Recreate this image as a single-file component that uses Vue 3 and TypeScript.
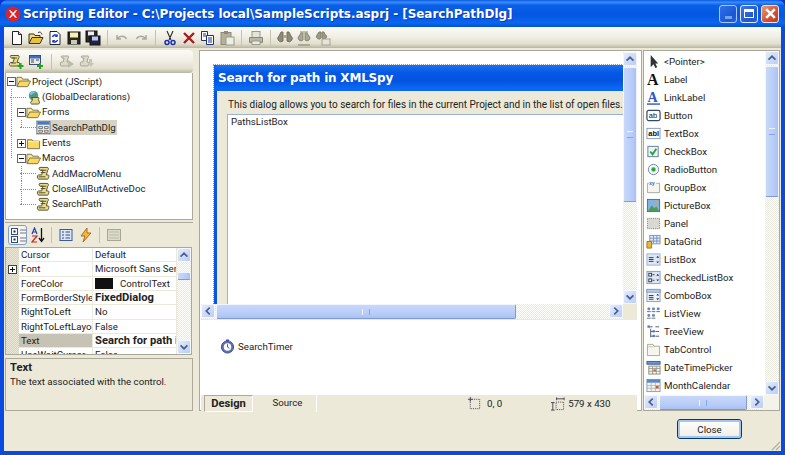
<script setup lang="ts">
type TreeRow = { label: string; level: number; icon: string; box?: '+' | '-'; selected?: boolean; guides?: [number, boolean][] }

const glyphs: Record<string, string> = {
  newfile: '<path d="M3.500 1.500h6l3 3v10h-9z" fill="#fff" stroke="#222"/><path d="M9.500 1.500v3h3" fill="#ddd" stroke="#222"/>',
  open: '<path d="M1 13V4h5l1 1.500h5V8" fill="#f5dc7a" stroke="#333"/><path d="M1 13.500l3-6h11l-3 6z" fill="#e8c33c" stroke="#333"/><path d="M10 2.500c2-1 3.500 0 4 2" fill="none" stroke="#333"/>',
  reload: '<path d="M3 1.500h7l3 3v10H3z" fill="#fff" stroke="#223"/><path d="M5.500 7a3 3 0 0 1 5-1M10.500 10a3 3 0 0 1-5 1" fill="none" stroke="#1d35d8" stroke-width="1.500"/><path d="M10.500 4v3h-3M5.500 13v-3h3" fill="#1d35d8"/>',
  save: '<rect x="2" y="2" width="12" height="12" fill="#2a2a18" stroke="#111"/><rect x="4" y="2.500" width="8" height="5" fill="#f6efb8"/><rect x="5" y="10" width="6" height="4" fill="#c9c9c0"/>',
  saveall: '<rect x="1" y="1" width="11" height="11" fill="#2a2a28" stroke="#111"/><rect x="3" y="1.500" width="6" height="4" fill="#eee"/><rect x="5" y="6" width="10" height="9" fill="#23233f" stroke="#111"/><rect x="7" y="6.500" width="6" height="4" fill="#b8c8f4"/>',
  undo: '<path d="M3 5v4h4M3.500 8.500c2-3 7-3.500 9 .5" fill="none" stroke="#a9a99c" stroke-width="1.500"/>',
  redo: '<path d="M13 5v4H9M12.500 8.500c-2-3-7-3.500-9 .5" fill="none" stroke="#a9a99c" stroke-width="1.500"/>',
  cut: '<path d="M5 1l4 9M11 1L7 10" stroke="#333" stroke-width="1.200" fill="none"/><circle cx="5" cy="12.500" r="2" fill="none" stroke="#1b2fa8" stroke-width="1.500"/><circle cx="11" cy="12.500" r="2" fill="none" stroke="#1b2fa8" stroke-width="1.500"/>',
  del: '<path d="M3 3l10 10M13 3L3 13" stroke="#a81c1c" stroke-width="2.400"/>',
  copy: '<path d="M1.500 1.500h6v9h-6z" fill="#fff" stroke="#334"/><path d="M6.500 5.500h7v9h-7z" fill="#fff" stroke="#1b2f90"/><path d="M3 4h3M3 6h3M8 8h4M8 10h4M8 12h4" stroke="#1b2f90"/>',
  paste: '<rect x="2" y="2.500" width="10" height="12" fill="#b5b09a" stroke="#8d8a7a"/><rect x="5" y="1" width="4" height="3" fill="#8d8a7a"/><rect x="7" y="7" width="8" height="8" fill="#eeeee6" stroke="#9a9a8c"/>',
  print: '<rect x="4" y="1.500" width="8" height="6" fill="#e6e4d8" stroke="#9a9a8c"/><path d="M1.500 7.500h13v5h-13z" fill="#b9b6a4" stroke="#8b8a78"/><rect x="4" y="11" width="8" height="3.500" fill="#eeeee6" stroke="#9a9a8c"/>',
  find: '<path d="M2 6l2-4h2v9a3 3 0 1 1-4-5zM14 6l-2-4h-2v9a3 3 0 1 0 4-5z" fill="#8d8a78" stroke="#77735f"/><rect x="6" y="5" width="4" height="3" fill="#a9a794"/>',
  findnext: '<path d="M4 2h8M3 6l2-3h2v7a2.500 2.500 0 1 1-4-4zM13 6l-2-3H9v7a2.500 2.500 0 1 0 4-4z" fill="#a9a794" stroke="#8d8a78"/><path d="M2 15h12" stroke="#9c9a88" stroke-width="1.500"/>',
  replace: '<path d="M2 5l2-3h2v6a2.500 2.500 0 1 1-4-3zM10 5L9 2H7v6a2.500 2.500 0 1 0 4-3z" fill="#9c9a88" stroke="#84826f"/><rect x="7" y="9" width="8" height="6" fill="#e7e5d7" stroke="#a3a18f"/>',
  scriptadd: '<path d="M3 1.500h7c1.500 0 1.500 2 .5 2.500L9 8.500h2c1 0 1 2.500 0 3.500H2.500c-1.500-.5-1.500-3 0-3.500H5l1.500-4.500H3.500c-1.500-.5-1.500-2.500-.5-2.500z" fill="#e9dc8e" stroke="#5f5a30"/><path d="M4 4h5M3 9h5" stroke="#5f5a30"/><path d="M12.500 9v6M9.500 12h6" stroke="#1fa51f" stroke-width="2"/>',
  formadd: '<rect x="1.500" y="1.500" width="11" height="9" fill="#ecebdf" stroke="#35507c"/><rect x="2" y="2" width="10" height="2.500" fill="#3f6fc4"/><path d="M3 6h3M3 8h3M8 6h3" stroke="#445"/><path d="M12 9v6M9 12h6" stroke="#1fa51f" stroke-width="2"/>',
  rungray: '<path d="M3 2h6c1 0 1 2 0 2L8 8h1c1 0 1 2 0 4H2c-1-1-1-3 0-4h2l1-4H3c-1-1-1-2 0-2z" fill="#dcdacb" stroke="#a9a794"/><path d="M9 6l6 4-6 4z" fill="#bdbba9"/>',
  debuggray: '<path d="M3 2h6c1 0 1 2 0 2L8 8h1c1 0 1 2 0 4H2c-1-1-1-3 0-4h2l1-4H3c-1-1-1-2 0-2z" fill="#dcdacb" stroke="#a9a794"/><path d="M10 5h3v4h2l-3 4-3-4h1z" fill="#c7c5b3"/>',
  folderopen: '<path d="M1 13V3.500h5l1 2h6V8" fill="#fbe98f" stroke="#76705a"/><path d="M1 13.500l3-6h11.500l-3 6z" fill="#fcd95c" stroke="#76705a"/>',
  folder: '<path d="M1.500 13.500V4h5l1 1.500h7v8z" fill="#fcd95c" stroke="#76705a"/><path d="M2 6h12" stroke="#fff3b0"/>',
  global: '<circle cx="8" cy="6" r="5" fill="#4a9a84"/><path d="M4 3c2-2 5-2 6-1-1 2-3 1-4 3-1 1-2 0-2-2z" fill="#7fc0e8"/><path d="M6 8h7c1 0 1 2 0 2l1 2c1 1 0 3-1 3H6c-2-1-1-3 0-3l1-2z" fill="#e3d684" stroke="#555028"/>',
  form: '<rect x="1" y="1.500" width="14" height="13" fill="#f2f0e6" stroke="#5f7fa8"/><rect x="1.500" y="2" width="13" height="3" fill="#4a79c9"/><path d="M3 7h4v2H3zM9 7h4v2H9zM3 11h4v2H3zM9 11h4v2H9z" fill="none" stroke="#555" stroke-width=".8"/>',
  script: '<path d="M4 1.500h8c1.500 0 1.500 2.500.5 3L11 9.500h2c1 0 1 3-.5 4.500H3c-2-.5-2-3.500-.5-4.500H6l1.500-5H4.500C3 4 3 1.500 4 1.500z" fill="#e9dc8e" stroke="#4f4b28"/><path d="M5 4.500h6M5 7h5M3 11.500h7" stroke="#4f4b28"/>',
  categorized: '<rect x="1.500" y="1.500" width="6" height="6" fill="#fff" stroke="#2d4c8c"/><rect x="1.500" y="9.500" width="6" height="6" fill="#fff" stroke="#2d4c8c"/><rect x="3.500" y="3.500" width="2" height="2" fill="#223"/><rect x="3.500" y="11.500" width="2" height="2" fill="#223"/><path d="M10 3h6M10 6h6M10 11h6M10 14h6" stroke="#778"/>',
  sorted: '<path d="M11.500 1v13M9 11l2.500 3.500L14 11" stroke="#111" stroke-width="1.300" fill="none"/><path d="M2 7l2.500-6L7 7M3 5h3" stroke="#2142b4" fill="none" stroke-width="1.200"/><path d="M2 9h5L2 15h5" stroke="#c22" fill="none" stroke-width="1.200"/>',
  props: '<rect x="2" y="2.500" width="12" height="11" fill="#dfe6f5" stroke="#3a5a98"/><path d="M4 5h2M4 8h2M4 11h2M7.500 5H12M7.500 8H12M7.500 11H12" stroke="#2d4c8c"/>',
  events: '<path d="M9 1L3 9h4l-2 6 8-9H9z" fill="#f6b73c" stroke="#b26a18"/>',
  pages: '<rect x="1.500" y="2.500" width="13" height="11" fill="#dcdacb" stroke="#a9a794"/><path d="M3 5h10M3 8h10M3 11h10" stroke="#bdbba9"/>',
  pointer: '<path d="M5 1v13l3-3 2 4 2-1-2-4h3z" fill="#333"/>',
  label: '<text x="1" y="14" font-family="Liberation Serif" font-size="17" font-weight="700" fill="#111">A</text>',
  linklabel: '<text x="1.500" y="13" font-family="Liberation Serif" font-size="15" font-weight="700" fill="#2b57c4">A</text><path d="M1 15h14" stroke="#2b57c4" stroke-width="1.500"/>',
  button: '<rect x="1" y="2.500" width="14" height="11" rx="2" fill="#fff" stroke="#334a6e" stroke-width="1.300"/><text x="3" y="11" font-family="Liberation Sans" font-size="8" fill="#111">ab</text>',
  textbox: '<rect x="1" y="2.500" width="14" height="11" fill="#fff" stroke="#7f9db9"/><text x="2.500" y="11" font-family="Liberation Sans" font-size="8" font-weight="700" fill="#111">abl</text>',
  checkbox: '<rect x="2" y="2.500" width="11" height="11" fill="#eef3f8" stroke="#5d7c9c"/><path d="M4.500 8l2.500 3 4-6" fill="none" stroke="#27a53b" stroke-width="2"/>',
  radio: '<circle cx="8" cy="8" r="5.500" fill="#f2f4f8" stroke="#6e87a6"/><circle cx="8" cy="8" r="2.300" fill="#2fa53c"/>',
  groupbox: '<path d="M3 3.500H1.500v10h13v-10H11" fill="#f5f4ee" stroke="#a5a597"/><text x="3.500" y="5" font-family="Liberation Sans" font-size="5" font-weight="700" fill="#2b57c4">xy</text>',
  picture: '<rect x="1.500" y="1.500" width="13" height="13" fill="#7fb4e2" stroke="#56687e"/><path d="M2 14l4-6 3 3 2-2 3 5z" fill="#4e9a56"/><circle cx="11" cy="5" r="1.800" fill="#e8a43a"/>',
  panel: '<rect x="1.500" y="2.500" width="13" height="11" fill="#d9d9d2" stroke="#77776c" stroke-dasharray="1 1"/>',
  datagrid: '<rect x="4" y="1.500" width="11" height="9" fill="#e2e8f6" stroke="#7b93be"/><path d="M4 4.500h11M4 7.500h11M8 2v8M11.500 2v8" stroke="#7b93be"/><path d="M1 8h5v7H1z" fill="#e8b838" stroke="#9b7818"/>',
  listbox: '<rect x="1" y="2" width="14" height="12" fill="#dce6f6" stroke="#9bb2d4"/><path d="M3 6h5M3 8h5M3 10h5" stroke="#333"/><path d="M11 6l1.500-2L14 6zM11 10l1.500 2 1.500-2z" fill="#334"/>',
  checkedlist: '<rect x="1" y="1.500" width="14" height="13" fill="#dce6f6" stroke="#7f9fcc"/><rect x="3" y="3.500" width="3" height="3" fill="#fff" stroke="#334"/><rect x="3" y="9.500" width="3" height="3" fill="#fff" stroke="#334"/><path d="M7 5h2M7 11h2" stroke="#334"/><path d="M11 6l1.500-2L14 6zM11 10l1.500 2 1.500-2z" fill="#334"/>',
  combobox: '<rect x="1" y="1.500" width="14" height="13" fill="#eef2f9" stroke="#7f9fcc"/><rect x="1" y="1.500" width="14" height="3" fill="#b8cbe8" stroke="#7f9fcc"/><path d="M3 8h5M3 10h5M3 12h5" stroke="#333"/><path d="M11 8l1.500-2L14 8zM11 11l1.500 2 1.500-2z" fill="#334"/>',
  listview: '<path d="M2 2h2v2H2zM7 2h2v2H7zM12 2h2v2h-2zM2 9h2v2H2zM7 9h2v2H7z" fill="#6f9fd8" stroke="#3d5e8c" stroke-width=".6"/><path d="M1 6h4M6 6h4M11 6h4M1 13h4M6 13h4" stroke="#667"/>',
  treeview: '<path d="M3 3h4M5 5v9M5 8h3M5 13h3M10 8h4M10 13h4M10 3h4" stroke="#556" stroke-width="1"/><rect x="1.500" y="1.500" width="2.500" height="2.500" fill="#4d7fc8"/><rect x="7" y="6.500" width="2.500" height="2.500" fill="#4d7fc8"/><rect x="7" y="11.500" width="2.500" height="2.500" fill="#4d7fc8"/>',
  tabcontrol: '<path d="M1.500 14.500V2.500h6l1 2h6v10z" fill="#f6f5ee" stroke="#a5a597"/><path d="M2 5h6" stroke="#c7c6b7"/>',
  datetime: '<rect x="1" y="1.500" width="14" height="3" fill="#6f94cc" stroke="#3d5e8c"/><rect x="3" y="6.500" width="12" height="8.500" fill="#f4f4ee" stroke="#8b8b80"/><path d="M3 9h12M3 12h12M7 7v8M11 7v8" stroke="#8b8b80" stroke-width=".8"/><rect x="8" y="10" width="2.500" height="2" fill="#d4522c"/>',
  calendar: '<rect x="1" y="1.500" width="14" height="13" fill="#f4f4ee" stroke="#7f9fcc"/><rect x="1" y="1.500" width="14" height="3.500" fill="#5b86c8"/><path d="M1 8h14M1 11h14M5.500 5v9M10 5v9" stroke="#aaa" stroke-width=".8"/><rect x="10.500" y="8.500" width="3" height="2.500" fill="#d4522c"/>',
  timer: '<circle cx="8" cy="8.500" r="6.500" fill="#5c6fb0" stroke="#3f4f8c"/><circle cx="8" cy="8.500" r="4" fill="#fff"/><path d="M8 8.500V5.500M8 8.500l2 1.500" stroke="#3f4f8c"/><rect x="6.500" y="0.500" width="3" height="2" fill="#3f4f8c"/>',
  pos: '<path d="M3.500 1v5M1 3.500h5" stroke="#445"/><rect x="3.500" y="3.500" width="10" height="10" fill="none" stroke="#445" stroke-dasharray="1 1"/>',
  size: '<path d="M7 1.500v3M15 1.500v3M7 3h8M1 7h4M1 15h4M3 7v8" stroke="#445"/><rect x="6.500" y="6.500" width="8" height="8" fill="none" stroke="#445" stroke-dasharray="1 1"/>',
}

const mainTools = [
  'newfile', 'open', 'reload', 'save', 'saveall', '|', 'undo', 'redo', '|',
  'cut', 'del', 'copy', 'paste', '|', 'print', '|', 'find', 'findnext', 'replace',
]

const treeTools = ['scriptadd', 'formadd', '|', 'rungray', 'debuggray']
const propTools = ['categorized', 'sorted', '|', 'props', 'events', '|', 'pages']

const treeRows: TreeRow[] = [
  { label: 'Project (JScript)', level: 0, icon: 'folderopen', box: '-' },
  { label: '(GlobalDeclarations)', level: 1, icon: 'global', guides: [[5, false]] },
  { label: 'Forms', level: 1, icon: 'folderopen', box: '-', guides: [[5, false]] },
  { label: 'SearchPathDlg', level: 2, icon: 'form', selected: true, guides: [[5, false], [15, true]] },
  { label: 'Events', level: 1, icon: 'folder', box: '+', guides: [[5, false]] },
  { label: 'Macros', level: 1, icon: 'folderopen', box: '-', guides: [[5, true]] },
  { label: 'AddMacroMenu', level: 2, icon: 'script', guides: [[15, false]] },
  { label: 'CloseAllButActiveDoc', level: 2, icon: 'script', guides: [[15, false]] },
  { label: 'SearchPath', level: 2, icon: 'script', guides: [[15, true]] },
]

// dotted connector lines of a tree row, half = the line stops at the row's middle
const guideStyle = (row: TreeRow) => {
  if (!row.guides) return {}
  return {
    background: row.guides
      .map(([x, half]) => `repeating-linear-gradient(#8c8c8c 0 1px, transparent 1px 2px) ${x}px 0 / 1px ${half ? '50%' : '100%'} no-repeat`)
      .join(','),
  }
}

const propRows = [
  { name: 'Cursor', value: 'Default' },
  { name: 'Font', value: 'Microsoft Sans Serif', expand: true },
  { name: 'ForeColor', value: 'ControlText', swatch: true },
  { name: 'FormBorderStyle', value: 'FixedDialog', bold: true },
  { name: 'RightToLeft', value: 'No' },
  { name: 'RightToLeftLayout', value: 'False' },
  { name: 'Text', value: 'Search for path in XMLSpy', bold: true, selected: true },
  { name: 'UseWaitCursor', value: 'False' },
]

const toolbox = [
  ['pointer', '<Pointer>'], ['label', 'Label'], ['linklabel', 'LinkLabel'], ['button', 'Button'],
  ['textbox', 'TextBox'], ['checkbox', 'CheckBox'], ['radio', 'RadioButton'], ['groupbox', 'GroupBox'],
  ['picture', 'PictureBox'], ['panel', 'Panel'], ['datagrid', 'DataGrid'], ['listbox', 'ListBox'],
  ['checkedlist', 'CheckedListBox'], ['combobox', 'ComboBox'], ['listview', 'ListView'],
  ['treeview', 'TreeView'], ['tabcontrol', 'TabControl'], ['datetime', 'DateTimePicker'],
  ['calendar', 'MonthCalendar'],
]

const arrows: Record<string, string> = {
  up: 'M3 9l4-4 4 4',
  down: 'M3 5l4 4 4-4',
  left: 'M9 3L5 7l4 4',
  right: 'M5 3l4 4-4 4',
}
</script>

<template>
  <div class="window">
    <header class="titlebar">
      <svg class="logo" viewBox="0 0 16 16">
        <circle cx="8" cy="8" r="7.500" fill="#d8252c" />
        <path d="M4 4c2 0 3 2 4 3 1-1 2-3 4-3-1 2-2 3-3 4 1 1 2 2 3 4-2 0-3-2-4-3-1 1-2 3-4 3 1-2 2-3 3-4-1-1-2-2-3-4z" fill="#fff" />
      </svg>
      <span class="title-text">Scripting Editor - C:\Projects local\SampleScripts.asprj - [SearchPathDlg]</span>
      <div class="caption-buttons">
        <span class="cap cap-min"><i></i></span>
        <span class="cap cap-max"><i></i></span>
        <span class="cap cap-close">
          <svg viewBox="0 0 12 12"><path d="M2 2l8 8M10 2l-8 8" stroke="#fff" stroke-width="2.400" /></svg>
        </span>
      </div>
    </header>

    <div class="client">
      <div class="toolbar main-toolbar">
        <template v-for="(tool, i) in mainTools" :key="i">
          <span v-if="tool === '|'" class="sep"></span>
          <svg v-else class="tool-icon" viewBox="0 0 16 16" v-html="glyphs[tool]"></svg>
        </template>
      </div>

      <div class="panes">
        <aside class="left-col">
          <div class="toolbar tree-toolbar">
            <template v-for="(tool, i) in treeTools" :key="i">
              <span v-if="tool === '|'" class="sep"></span>
              <svg v-else class="tool-icon" viewBox="0 0 16 16" v-html="glyphs[tool]"></svg>
            </template>
          </div>
          <div class="tree">
            <div
              v-for="row in treeRows"
              :key="row.label"
              class="tree-row"
              :class="`lvl-${row.level}`"
              :style="guideStyle(row)"
            >
              <span class="tree-gutter">
                <svg v-if="row.box" class="box" viewBox="0 0 9 9">
                  <rect x=".5" y=".5" width="8" height="8" fill="#fff" stroke="#666" />
                  <path :d="row.box === '+' ? 'M2 4.500h5M4.500 2v5' : 'M2 4.500h5'" stroke="#111" />
                </svg>
                <span v-else class="stub"></span>
              </span>
              <span class="node" :class="{ picked: row.selected }">
                <svg class="node-icon" viewBox="0 0 16 16" v-html="glyphs[row.icon]"></svg>
                <span class="node-label">{{ row.label }}</span>
              </span>
            </div>
          </div>

          <div class="props">
            <div class="prop-tools">
              <template v-for="(tool, i) in propTools" :key="i">
                <span v-if="tool === '|'" class="sep"></span>
                <span v-else class="prop-btn" :class="{ on: tool === 'categorized' }">
                  <svg class="tool-icon" viewBox="0 0 16 16" v-html="glyphs[tool]"></svg>
                </span>
              </template>
            </div>
            <div class="grid-wrap">
              <div class="grid">
                <div v-for="p in propRows" :key="p.name" class="prop-row">
                  <span class="gutter">
                    <svg v-if="p.expand" class="box" viewBox="0 0 9 9">
                      <rect x=".5" y=".5" width="8" height="8" fill="#fff" stroke="#444" />
                      <path d="M2 4.500h5M4.500 2v5" stroke="#111" />
                    </svg>
                  </span>
                  <span class="prop-name" :class="{ sel: p.selected }">{{ p.name }}</span>
                  <span class="prop-val" :class="{ strong: p.bold }">
                    <i v-if="p.swatch" class="swatch"></i>{{ p.value }}
                  </span>
                </div>
              </div>
              <div class="sb sb-v">
                <span class="sb-btn"><svg viewBox="0 0 14 14"><path :d="arrows.up" /></svg></span>
                <span class="sb-track"><span class="sb-thumb" style="height: 8px; margin-top: 9px"></span></span>
                <span class="sb-btn"><svg viewBox="0 0 14 14"><path :d="arrows.down" /></svg></span>
              </div>
            </div>
            <div class="desc">
              <b>Text</b>
              <span>The text associated with the control.</span>
            </div>
          </div>
        </aside>

        <main class="center">
          <div class="design-row">
            <div class="surface">
              <div class="form">
                <div class="form-title">Search for path in XMLSpy</div>
                <div class="form-body">
                  <p>This dialog allows you to search for files in the current Project and in the list of open files.</p>
                  <div class="listbox">PathsListBox</div>
                </div>
              </div>
            </div>
            <div class="sb sb-v">
              <span class="sb-btn"><svg viewBox="0 0 14 14"><path :d="arrows.up" /></svg></span>
              <span class="sb-track"><span class="sb-thumb" style="height: 135px"><em class="grip-h"></em></span></span>
              <span class="sb-btn"><svg viewBox="0 0 14 14"><path :d="arrows.down" /></svg></span>
            </div>
          </div>
          <div class="hbar-row">
            <div class="sb sb-h">
              <span class="sb-btn"><svg viewBox="0 0 14 14"><path :d="arrows.left" /></svg></span>
              <span class="sb-track"><span class="sb-thumb" style="width: 300px"><em class="grip-v"></em></span></span>
              <span class="sb-btn"><svg viewBox="0 0 14 14"><path :d="arrows.right" /></svg></span>
            </div>
          </div>
          <div class="tray">
            <svg class="node-icon" viewBox="0 0 16 16" v-html="glyphs.timer"></svg>
            <span>SearchTimer</span>
          </div>
          <div class="statusbar">
            <span class="tab active">Design</span>
            <span class="tab">Source</span>
            <span class="stat stat-pos"><svg class="node-icon" viewBox="0 0 16 16" v-html="glyphs.pos"></svg>0, 0</span>
            <span class="stat stat-size"><svg class="node-icon" viewBox="0 0 16 16" v-html="glyphs.size"></svg>579 x 430</span>
          </div>
        </main>

        <aside class="right-col">
          <div class="right-top">
            <ul class="toolbox">
              <li v-for="item in toolbox" :key="item[1]">
                <svg class="node-icon" viewBox="0 0 16 16" v-html="glyphs[item[0]]"></svg>
                <span>{{ item[1] }}</span>
              </li>
            </ul>
            <div class="sb sb-v">
              <span class="sb-btn"><svg viewBox="0 0 14 14"><path :d="arrows.up" /></svg></span>
              <span class="sb-track"><span class="sb-thumb" style="height: 131px"><em class="grip-h"></em></span></span>
              <span class="sb-btn"><svg viewBox="0 0 14 14"><path :d="arrows.down" /></svg></span>
            </div>
          </div>
          <div class="right-bar">
            <div class="sb sb-h">
              <span class="sb-btn"><svg viewBox="0 0 14 14"><path :d="arrows.left" /></svg></span>
              <span class="sb-track"><span class="sb-thumb" style="width: 88px"><em class="grip-v"></em></span></span>
              <span class="sb-btn"><svg viewBox="0 0 14 14"><path :d="arrows.right" /></svg></span>
            </div>
          </div>
        </aside>
      </div>

      <footer class="footer">
        <button class="close-btn">Close</button>
        <svg class="resize-grip" viewBox="0 0 12 12">
          <path d="M11 3l-8 8M11 7l-4 4" stroke="#b5b2a0" stroke-width="1.300" />
        </svg>
      </footer>
    </div>
  </div>
</template>

<style>
html,
body {
  margin: 0;
  background: #0831d9;
  overflow: hidden;
}
</style>

<style scoped>
.window {
  width: 785px;
  height: 455px;
  display: flex;
  flex-direction: column;
  font-family: Roboto, 'Liberation Sans', sans-serif;
  font-size: 9.7px;
  color: #222;
  background: #0a4ae0;
  box-sizing: border-box;
  padding: 0 4px 4px;
  overflow: hidden;
  border-radius: 7px 7px 0 0;
}

.titlebar {
  height: 27px;
  flex: none;
  margin: 0 -4px;
  padding: 0 6px 0 5px;
  display: flex;
  align-items: center;
  background: linear-gradient(#0a5ae6 0, #3b8cf8 8%, #0a5fe8 20%, #0457e2 55%, #0b66f0 85%, #0350d0 100%);
  border-radius: 7px 7px 0 0;
}

.logo {
  width: 16px;
  height: 16px;
  flex: none;
}

.title-text {
  margin-left: 2px;
  font-size: 12px;
  font-weight: 700;
  font-family: 'DejaVu Sans', sans-serif;
  letter-spacing: -0.05px;
  color: #fff;
  text-shadow: 1px 1px 0 #0a3aa8;
  white-space: nowrap;
}

.caption-buttons {
  margin-left: auto;
  display: flex;
  gap: 3px;
}

.cap {
  width: 18px;
  height: 18px;
  border: 1px solid #dfe9fb;
  border-radius: 3px;
  box-sizing: border-box;
  display: flex;
  align-items: center;
  justify-content: center;
  background: linear-gradient(135deg, #3f78e8, #2256cf 70%, #2a62de);
}

.cap-min {
  opacity: 0.75;
}

.cap-min i {
  width: 7px;
  height: 3px;
  margin-top: 8px;
  background: #9db9ee;
}

.cap-max i {
  width: 10px;
  height: 9px;
  border: 1px solid #fff;
  border-top-width: 3px;
  box-sizing: border-box;
}

.cap-close {
  background: linear-gradient(135deg, #ec9a7c, #d9532f 55%, #c23a1c);
}

.cap-close svg {
  width: 13px;
  height: 13px;
}

.client {
  flex: 1;
  min-height: 0;
  display: flex;
  flex-direction: column;
  background: #ece9d8;
}

.toolbar {
  display: flex;
  align-items: center;
  flex: none;
  background: linear-gradient(#fbfaf6, #f1efe5 45%, #e2dfcf 80%, #b8b5a2);
}

.main-toolbar {
  height: 21px;
  padding-left: 5px;
  gap: 3px;
}

.tool-icon {
  width: 16px;
  height: 16px;
  flex: none;
}

.sep {
  width: 1px;
  height: 16px;
  margin: 0 3px;
  background: #c5c2b0;
  flex: none;
}

.panes {
  flex: 1;
  min-height: 0;
  display: flex;
  padding-top: 2px;
}

.left-col {
  width: 188px;
  margin-left: 1px;
  flex: none;
  display: flex;
  flex-direction: column;
}

.tree-toolbar {
  height: 23px;
  padding-left: 3px;
  gap: 4px;
  border-radius: 0 4px 4px 0;
}

.tree {
  height: 147px;
  flex: none;
  box-sizing: border-box;
  padding-top: 1px;
  background: #fff;
  border: 1px solid #aca899;
  border-top: 0;
}

.tree-row {
  height: 15.35px;
  display: flex;
  align-items: center;
  white-space: nowrap;
}

.tree-gutter {
  width: 10px;
  flex: none;
  display: flex;
  justify-content: flex-end;
}

.tree-gutter:has(.box) {
  justify-content: center;
}

.lvl-1 {
  padding-left: 10px;
}

.lvl-2 {
  padding-left: 20px;
}

.box {
  width: 9px;
  height: 9px;
  flex: none;
}

.stub {
  width: 16px;
  flex: none;
  border-top: 1px dotted #8c8c8c;
}

.node-icon {
  width: 15px;
  height: 15px;
  flex: none;
}

.node {
  display: flex;
  align-items: center;
  padding-right: 1px;
}

.node.picked {
  background: #d6d3c5;
}

.node-label {
  margin-left: 1px;
  line-height: 14px;
}

.props {
  flex: 1;
  min-height: 0;
  margin-top: 2px;
  display: flex;
  flex-direction: column;
  border-top: 1px solid #aca899;
}

.prop-tools {
  height: 24px;
  flex: none;
  display: flex;
  align-items: center;
  padding-left: 3px;
  gap: 1px;
}

.prop-btn {
  width: 19px;
  height: 20px;
  display: flex;
  align-items: center;
  justify-content: center;
  box-sizing: border-box;
}

.prop-btn.on {
  background: #f6f6ee;
  border: 1px solid #7d9cd0;
  border-radius: 3px;
}

.grid-wrap {
  height: 108px;
  flex: none;
  margin-right: 1px;
  display: flex;
  overflow: hidden;
  border: 1px solid #aca899;
  box-sizing: border-box;
}

.grid {
  flex: 1;
  min-width: 0;
  overflow: hidden;
  background: #fff;
}

.prop-row {
  height: 14.35px;
  display: grid;
  grid-template-columns: 13px 74px 1fr;
  align-items: stretch;
  box-sizing: border-box;
  line-height: 14px;
}

.gutter {
  background: repeating-conic-gradient(#d6d3c3 0 25%, #e9e6d6 0 50%) 0 0 / 2px 2px;
  display: flex;
  align-items: center;
  justify-content: center;
}

.prop-name,
.prop-val {
  white-space: nowrap;
  overflow: hidden;
  padding-left: 2px;
  border-bottom: 1px solid #ece9d8;
  border-right: 1px solid #ece9d8;
}

.prop-name.sel {
  background: #c6c3b4;
}

.strong {
  font-weight: 700;
  font-size: 11.2px;
}

.swatch {
  display: inline-block;
  width: 18px;
  height: 11px;
  background: #111;
  margin-right: 7px;
  vertical-align: -2px;
}

.desc {
  flex: 1;
  margin-top: 3px;
  box-sizing: border-box;
  padding: 2px 4px;
  display: flex;
  flex-direction: column;
  gap: 1px;
  line-height: 13px;
  border: 1px solid #aca899;
}

.desc b {
  font-size: 11.2px;
}

.center {
  width: 443px;
  margin-left: 6px;
  flex: none;
  display: flex;
  flex-direction: column;
  background: #fff;
  border: 1px solid #aca899;
  box-sizing: border-box;
  padding: 1px 4px 1px 1px;
}

.design-row {
  height: 252px;
  flex: none;
  display: flex;
}

.surface {
  flex: 1;
  min-width: 0;
  padding: 13px 0 0 13px;
  overflow: hidden;
  background: #fff;
}

.form {
  width: 579px;
  height: 430px;
  outline: 1px dotted #999;
  border: 3px solid #0a55e0;
  border-top: 0;
  box-sizing: border-box;
  background: #ece9d8;
}

.form-title {
  height: 26px;
  margin: 0 -3px;
  padding-left: 4px;
  display: flex;
  align-items: center;
  font: 700 12px 'DejaVu Sans', sans-serif;
  letter-spacing: -0.2px;
  color: #fff;
  background: linear-gradient(#1a72f0, #0558e4 30%, #0453e0 60%, #0a68f2 90%);
  border-radius: 4px 4px 0 0;
}

.form-body {
  padding: 7px 0 0 10px;
}

.form-body p {
  margin: 0 0 0 1px;
  line-height: 13px;
  white-space: nowrap;
  font-size: 10px;
}

.listbox {
  margin-top: 3px;
  height: 300px;
  padding: 1px 3px;
  background: #fff;
  border-top: 1px solid #9db2d0;
  border-left: 1px solid #9db2d0;
}

.hbar-row {
  height: 16px;
  flex: none;
  display: flex;
  background: #ece9d8;
}

.hbar-row .sb-h {
  width: 422px;
}

.tray {
  height: 75px;
  flex: none;
  display: flex;
  align-items: flex-start;
  gap: 3px;
  padding: 19px 0 0 19px;
  box-sizing: border-box;
  line-height: 15px;
}

.statusbar {
  flex: 1;
  display: flex;
  align-items: center;
  background: #ece9d8;
  padding-left: 3px;
}

.tab {
  height: 17px;
  line-height: 16px;
  width: 58px;
  text-align: center;
  box-sizing: border-box;
  border-right: 1px solid #fff;
}

.tab.active {
  width: 49px;
  margin-right: 6px;
  font-weight: 700;
  font-size: 11.2px;
  border: 1px solid #aca899;
  border-right-color: #fff;
  border-bottom-color: #fff;
}

.stat {
  display: flex;
  align-items: center;
  gap: 5px;
}

.stat-pos {
  margin-left: 150px;
}

.stat-size {
  margin-left: 48px;
  gap: 3px;
}

.right-col {
  width: 137px;
  margin-left: 1px;
  flex: none;
  display: flex;
  flex-direction: column;
  border: 1px solid #aca899;
  box-sizing: border-box;
  background: #fff;
}

.right-top {
  flex: 1;
  min-height: 0;
  display: flex;
}

.toolbox {
  flex: 1;
  min-width: 0;
  margin: 0;
  padding: 1px 0 0 2px;
  list-style: none;
  overflow: hidden;
}

.toolbox li {
  height: 18px;
  display: flex;
  align-items: center;
  gap: 3px;
  white-space: nowrap;
}

.right-bar {
  height: 15px;
  flex: none;
  display: flex;
  background: #f4f3ea;
}

.right-bar .sb-h {
  width: 120px;
}

.sb {
  display: flex;
  flex: none;
  background: repeating-conic-gradient(#fdfdfa 0 25%, #ebeae0 0 50%) 0 0 / 2px 2px;
}

.sb-v {
  width: 14px;
  flex-direction: column;
  align-self: stretch;
}

.sb-h {
  height: 15px;
}

.sb-btn {
  width: 14px;
  height: 14px;
  flex: none;
  display: flex;
  border: 1px solid #f4f7fd;
  border-radius: 2px;
  box-sizing: border-box;
  background: linear-gradient(135deg, #e4ecfd, #b9cdf7);
}

.sb-btn svg {
  width: 12px;
  height: 12px;
}

.sb-btn path {
  fill: none;
  stroke: #4d6185;
  stroke-width: 2;
}

.sb-track {
  flex: 1;
  min-width: 0;
  min-height: 0;
  display: flex;
  flex-direction: column;
  padding: 1px 0;
}

.sb-h .sb-track {
  flex-direction: row;
  padding: 0 1px;
}

.sb-thumb {
  display: flex;
  align-items: center;
  justify-content: center;
  flex: none;
  box-sizing: border-box;
  background: linear-gradient(90deg, #c9d8fb, #b6cbf7 70%, #a9c0f2);
  border: 1px solid #f2f5fe;
  border-bottom-color: #7f9ad6;
  border-radius: 2px;
}

.sb-h .sb-thumb {
  background: linear-gradient(#c9d8fb, #b6cbf7 70%, #a9c0f2);
  border-right-color: #7f9ad6;
}

.grip-h {
  width: 6px;
  height: 5px;
  border-top: 1px solid #eef3fe;
  border-bottom: 1px solid #8aa4dc;
}

.grip-v {
  width: 6px;
  height: 6px;
  border-left: 1px solid #eef3fe;
  border-right: 1px solid #8aa4dc;
}

.footer {
  height: 40px;
  flex: none;
  display: flex;
  align-items: flex-start;
  justify-content: flex-end;
  padding: 8px 39px 0 0;
  box-sizing: border-box;
  position: relative;
}

.close-btn {
  width: 65px;
  height: 20px;
  padding: 0;
  font: 9.7px Roboto, sans-serif;
  color: #222;
  background: linear-gradient(#fefefe, #f2f1e8 85%, #dcd8c8);
  border: 1px solid #003c74;
  border-radius: 3px;
  box-shadow: inset 0 0 0 2px #a9c4ee;
}

.resize-grip {
  position: absolute;
  right: 0;
  bottom: 0;
  width: 12px;
  height: 12px;
}
</style>
